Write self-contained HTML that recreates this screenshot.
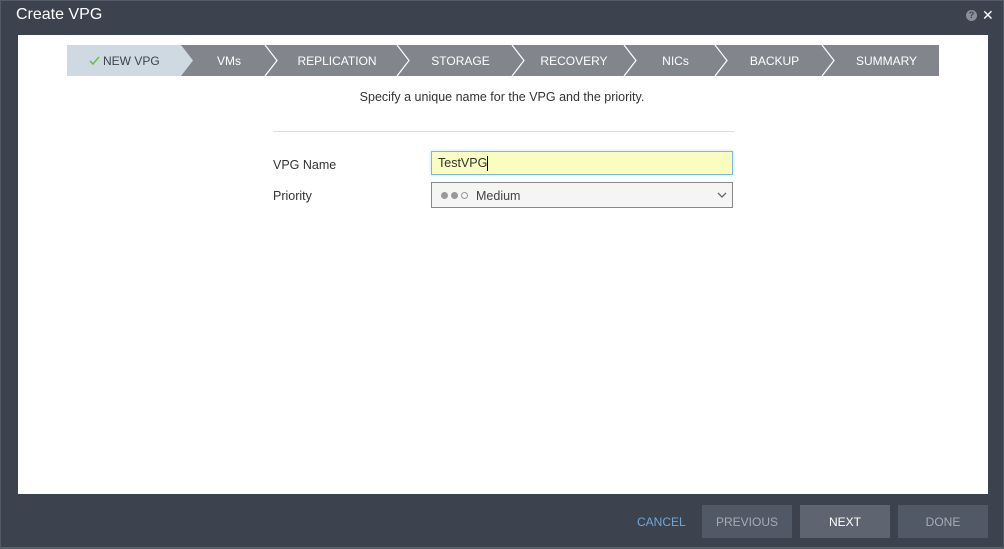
<!DOCTYPE html>
<html><head><style>
body{margin:0;width:1004px;height:549px;background:#3d434e;font-family:"Liberation Sans",sans-serif;position:relative;overflow:hidden}
.t{position:absolute;white-space:nowrap}
.panel{position:absolute;left:18px;top:35px;width:970px;height:459px;background:#fff}
.step{position:absolute;top:46px;height:31px;line-height:31px;color:#fff;font-size:12px;text-align:center}
.btn{position:absolute;top:505px;width:90px;height:33px;line-height:34px;text-align:center;font-size:12px}
</style></head><body>
<div style="position:absolute;left:0;top:0;width:1004px;height:549px;box-sizing:border-box;border:1px solid #555b66;border-bottom:2px solid #5a606a"></div>
<div class="t" style="left:16px;top:6px;color:#fff;font-size:16px">Create VPG</div>
<div class="t" style="left:966px;top:10px;width:11px;height:11px;border-radius:50%;background:#8a8f97;color:#3d434e;font-size:9px;line-height:11px;text-align:center;font-weight:bold">?</div>
<div class="t" style="left:982px;top:7px;color:#fff;font-size:14px">✕</div>
<div class="panel"></div>
<svg style="position:absolute;left:0;top:0" width="1004" height="100">
<rect x="67" y="45" width="872" height="31" fill="#82858c"/>
<polygon points="67,45 181,45 193,60.5 181,76 67,76" fill="#cfd9e2"/>
<g fill="none" stroke="#fff" stroke-width="1.2">
<polyline points="265,45 277,60.5 265,76"/>
<polyline points="397,45 409,60.5 397,76"/>
<polyline points="512,45 524,60.5 512,76"/>
<polyline points="624,45 636,60.5 624,76"/>
<polyline points="715,45 727,60.5 715,76"/>
<polyline points="822,45 834,60.5 822,76"/>
</g>
<polyline points="90,61 93,64 99,57" fill="none" stroke="#6cc04a" stroke-width="1.6"/>
</svg>
<div class="step" style="left:103px;color:#3d434e;text-align:left">NEW VPG</div>
<div class="step" style="left:193px;width:72px">VMs</div>
<div class="step" style="left:277px;width:120px">REPLICATION</div>
<div class="step" style="left:409px;width:103px">STORAGE</div>
<div class="step" style="left:524px;width:100px">RECOVERY</div>
<div class="step" style="left:636px;width:79px">NICs</div>
<div class="step" style="left:727px;width:95px">BACKUP</div>
<div class="step" style="left:834px;width:105px">SUMMARY</div>
<div class="t" style="left:0;width:1004px;text-align:center;top:90px;font-size:12.5px;color:#333">Specify a unique name for the VPG and the priority.</div>
<div style="position:absolute;left:273px;top:131px;width:461px;height:1px;background:#ddd"></div>
<div class="t" style="left:273px;top:158px;font-size:12.5px;color:#333">VPG Name</div>
<div class="t" style="left:273px;top:189px;font-size:12.5px;color:#333">Priority</div>
<div style="position:absolute;left:431px;top:151px;width:300px;height:22px;border:1px solid #7ab8e6;background:#f9fdbf;box-shadow:0 0 3px #bfe0f7;font-size:12.5px;line-height:23px;color:#333;box-sizing:content-box"><span style="padding-left:6px">TestVPG</span><span style="display:inline-block;width:1px;height:15px;background:#000;vertical-align:middle"></span></div>
<div style="position:absolute;left:431px;top:182px;width:300px;height:24px;border:1px solid #888;background:#f5f5f5;font-size:12.5px;line-height:26px;color:#444">
<span style="position:absolute;left:9px;top:9px;width:7px;height:7px;border-radius:50%;background:#999"></span>
<span style="position:absolute;left:19px;top:9px;width:7px;height:7px;border-radius:50%;background:#999"></span>
<span style="position:absolute;left:29px;top:9px;width:5px;height:5px;border-radius:50%;border:1px solid #999"></span>
<span style="position:absolute;left:44px">Medium</span>
<svg style="position:absolute;left:285px;top:9px" width="10" height="7"><polyline points="1,1 5,5 9,1" fill="none" stroke="#666" stroke-width="1.3"/></svg>
</div>
<div class="t" style="left:637px;top:515px;font-size:12px;color:#6fa8d6">CANCEL</div>
<div class="btn" style="left:702px;background:#525966;color:#a7abb2">PREVIOUS</div>
<div class="btn" style="left:800px;background:#5e6571;color:#fff">NEXT</div>
<div class="btn" style="left:898px;background:#525966;color:#a7abb2">DONE</div>
</body></html>
